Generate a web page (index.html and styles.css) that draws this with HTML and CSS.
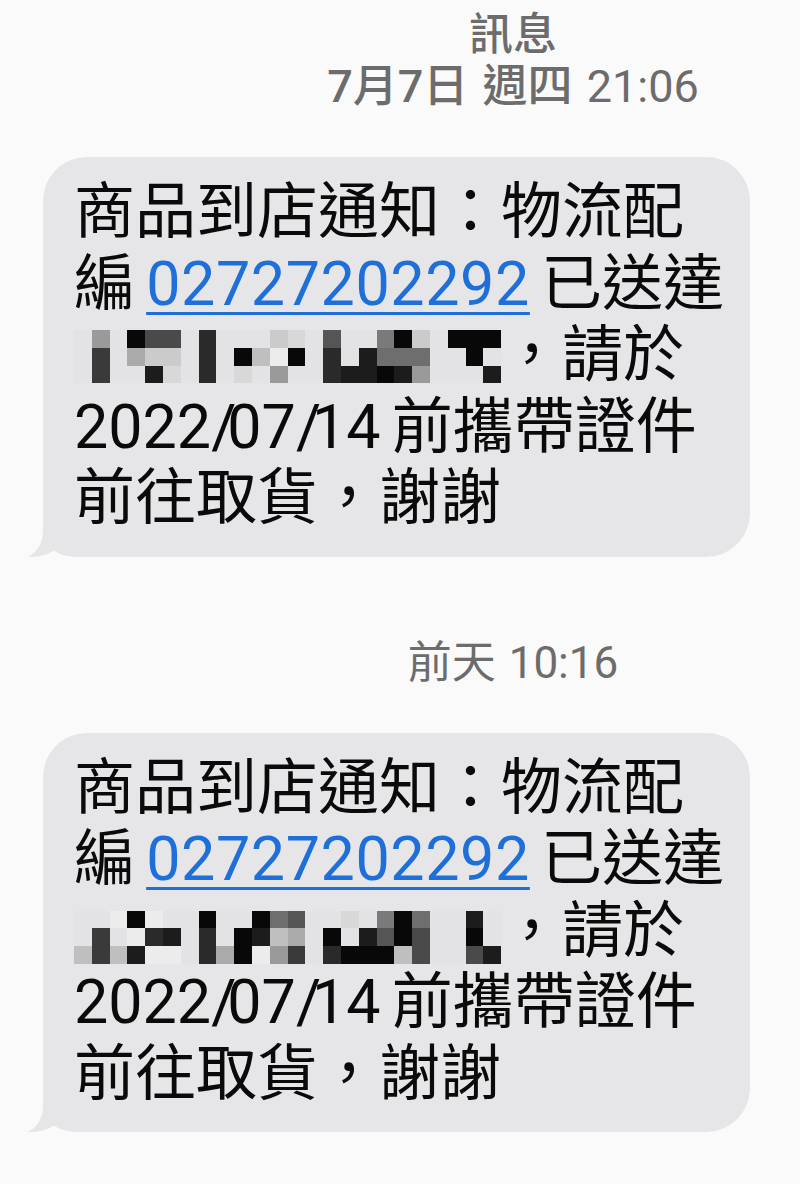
FILE: index.html
```html
<!DOCTYPE html>
<html lang="zh-Hant">
<head>
<meta charset="utf-8">
<title>訊息</title>
<link rel="stylesheet" href="styles.css">
</head>
<body>
<main class="thread">
  <header class="thread-head">
    <div class="title">訊息</div>
    <div class="stamp stamp-top"><span class="day">7月7日 週四</span> 21:06</div>
  </header>

  <div class="bubble">
    <p class="msg">商品到店通知：物流配<br>編 <a class="link" href="#">02727202292</a> 已送達<br><span class="mosaic"><i class="l"></i><i class="l"></i><i class="l"></i><i class="p"></i><i class="f"></i><i class="f"></i><i class="l"></i><i class="l"></i><i class="l"></i><i class="k"></i><i class="q"></i><i class="l"></i><i class="g"></i><i class="s"></i><i class="d"></i><i class="g"></i><i class="s"></i><i class="t"></i><i class="l"></i><i class="l"></i><i class="l"></i><i class="e"></i><i class="e"></i><i class="e"></i><i class="l"></i><i class="l"></i><i class="l"></i><i class="l"></i><i class="k"></i><i class="t"></i><i class="l"></i><i class="r"></i><i class="l"></i><i class="s"></i><i class="w"></i><i class="p"></i><i class="t"></i><i class="k"></i><i class="l"></i><i class="l"></i><i class="l"></i><i class="l"></i><i class="h"></i><i class="e"></i><i class="e"></i><i class="l"></i><i class="l"></i><i class="d"></i><i class="l"></i><i class="d"></i><i class="d"></i><i class="n"></i><i class="m"></i><i class="k"></i><i class="k"></i><i class="m"></i><i class="d"></i><i class="s"></i><i class="m"></i><i class="p"></i><i class="l"></i><i class="l"></i><i class="l"></i><i class="k"></i><i class="l"></i><i class="l"></i><i class="k"></i><i class="k"></i><i class="l"></i><i class="k"></i><i class="l"></i><i class="d"></i></span>，請於<br><span class="date">2022<span class="sl">/</span>07<span class="sl">/</span>14</span> 前攜帶證件<br>前往取貨，謝謝</p>
    <svg class="tail" viewBox="0 0 60 40" aria-hidden="true"><path d="M16 0 L16 14 C16 27 10 35 1 40 C10 40.6 20 38.4 27 33.5 C33 38 42 40 52 40 L60 40 L60 0 Z"/></svg>
  </div>

  <div class="stamp stamp-mid">前天 10:16</div>

  <div class="bubble">
    <p class="msg">商品到店通知：物流配<br>編 <a class="link" href="#">02727202292</a> 已送達<br><span class="mosaic mosaic-low"><i class="l"></i><i class="l"></i><i class="r"></i><i class="l"></i><i class="f"></i><i class="f"></i><i class="w"></i><i class="l"></i><i class="r"></i><i class="k"></i><i class="w"></i><i class="d"></i><i class="w"></i><i class="e"></i><i class="w"></i><i class="l"></i><i class="d"></i><i class="w"></i><i class="l"></i><i class="l"></i><i class="l"></i><i class="k"></i><i class="e"></i><i class="e"></i><i class="l"></i><i class="l"></i><i class="q"></i><i class="l"></i><i class="k"></i><i class="k"></i><i class="k"></i><i class="d"></i><i class="w"></i><i class="m"></i><i class="r"></i><i class="p"></i><i class="h"></i><i class="q"></i><i class="f"></i><i class="l"></i><i class="l"></i><i class="l"></i><i class="l"></i><i class="k"></i><i class="e"></i><i class="t"></i><i class="l"></i><i class="k"></i><i class="l"></i><i class="d"></i><i class="k"></i><i class="n"></i><i class="h"></i><i class="k"></i><i class="k"></i><i class="k"></i><i class="r"></i><i class="m"></i><i class="g"></i><i class="g"></i><i class="l"></i><i class="l"></i><i class="l"></i><i class="l"></i><i class="l"></i><i class="l"></i><i class="d"></i><i class="k"></i><i class="g"></i><i class="l"></i><i class="l"></i><i class="d"></i></span>，請於<br><span class="date">2022<span class="sl">/</span>07<span class="sl">/</span>14</span> 前攜帶證件<br>前往取貨，謝謝</p>
    <svg class="tail" viewBox="0 0 60 40" aria-hidden="true"><path d="M16 0 L16 14 C16 27 10 35 1 40 C10 40.6 20 38.4 27 33.5 C33 38 42 40 52 40 L60 40 L60 0 Z"/></svg>
  </div>
</main>
</body>
</html>
```

FILE: styles.css
```css
html, body {
  margin: 0;
  padding: 0;
  background: #fafafa;
}

body {
  width: 800px;
  height: 1184px;
  overflow: hidden;
  font-family: Roboto, "Noto Sans CJK TC", sans-serif;
}

.thread {
  display: flex;
  flex-direction: column;
  padding-top: 9px;
}

.thread-head {
  display: flex;
  flex-direction: column;
  align-items: center;
  padding-left: 226px;
}

.title,
.stamp {
  font-size: 44px;
  line-height: 52px;
  color: #6c6c6c;
  font-weight: 400;
  white-space: nowrap;
}

.title {
  font-weight: 500;
}

.stamp-top {
  font-size: 45px;
  word-spacing: 3px;
}

.day {
  font-weight: 500;
}

.stamp-mid {
  align-self: stretch;
  text-align: center;
  padding-left: 226px;
  margin-top: 80px;
  word-spacing: 2px;
}

.bubble {
  position: relative;
  margin: 44px 0 0 43px;
  width: 707px;
  box-sizing: border-box;
  padding: 20px 0 22px 31px;
  background: #e6e6e8;
  border-radius: 44px;
}

.msg {
  margin: 0;
  font-size: 61px;
  line-height: 71.5px;
  color: #0a0a0a;
  white-space: nowrap;
  word-spacing: -4px;
}

.link {
  color: #1f6fdb;
  letter-spacing: 0.6px;
  text-decoration: underline;
  text-decoration-thickness: 3px;
  text-underline-offset: 7px;
}

.date .sl {
  letter-spacing: -9px;
}

.tail {
  position: absolute;
  left: -16px;
  bottom: 0;
  width: 60px;
  height: 40px;
  fill: #e6e6e8;
}

.mosaic {
  display: inline-grid;
  grid-auto-flow: column;
  grid-template-rows: repeat(3, 17.8px);
  grid-auto-columns: 17.8px;
  width: 427px;
  height: 53.4px;
  vertical-align: top;
  margin-top: 10px;
}

.mosaic-low {
  margin-top: 15px;
}

.mosaic i { display: block; }
.mosaic .l { background: #e3e3e5; }
.mosaic .w { background: #ececec; }
.mosaic .t { background: #d8d8d8; }
.mosaic .s { background: #cbcbcb; }
.mosaic .r { background: #bfbfbf; }
.mosaic .q { background: #aaaaaa; }
.mosaic .p { background: #9a9a9a; }
.mosaic .n { background: #7a7a7a; }
.mosaic .m { background: #6e6e6e; }
.mosaic .h { background: #555555; }
.mosaic .g { background: #4a4a4a; }
.mosaic .f { background: #3a3a3a; }
.mosaic .e { background: #2a2a2a; }
.mosaic .d { background: #1c1c1c; }
.mosaic .k { background: #080808; }
```
